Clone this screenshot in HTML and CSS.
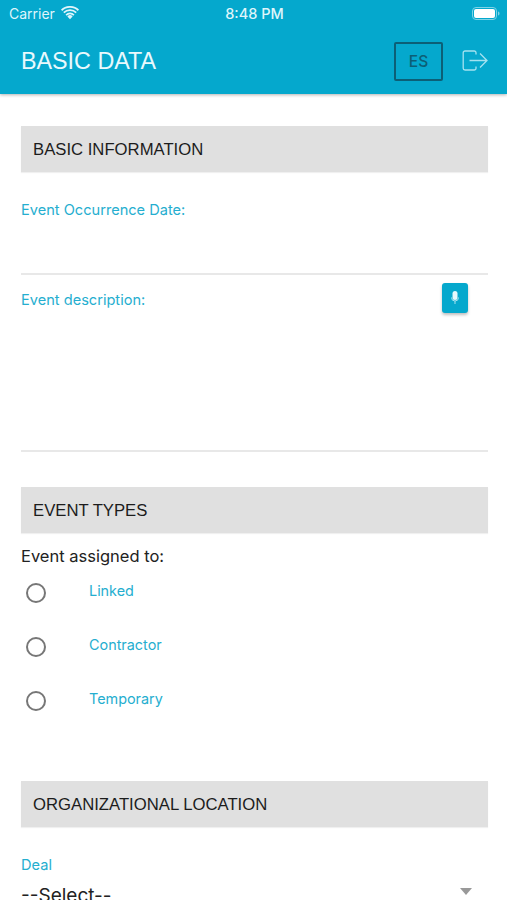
FILE: index.html
```html
<!DOCTYPE html>
<html lang="en">
<head>
<meta charset="utf-8">
<title>Basic Data</title>
<link rel="stylesheet" href="styles.css">
</head>
<body>
<header class="app-header">
  <div class="status-bar">
    <div class="status-left">
      <span>Carrier</span>
      <svg class="wifi" viewBox="0 0 18 14" width="18" height="14"><path d="M9 13.2 6.4 10.4a3.7 3.7 0 0 1 5.2 0Z" fill="#dff5fb"/><path d="M4.5 8.4a6.5 6.5 0 0 1 9 0l-1.2 1.3a4.8 4.8 0 0 0-6.6 0Z" fill="#dff5fb"/><path d="M2.2 6A9.8 9.8 0 0 1 15.8 6l-1.2 1.3a8 8 0 0 0-11.2 0Z" fill="#dff5fb"/><path d="M0 3.6a13 13 0 0 1 18 0l-1.2 1.3a11.2 11.2 0 0 0-15.6 0Z" fill="#dff5fb"/></svg>
    </div>
    <span class="status-time">8:48 PM</span>
    <svg class="battery" viewBox="0 0 28 13" width="28" height="13"><rect x=".5" y=".5" width="24" height="12" rx="3.5" fill="none" stroke="#7fd3e6"/><rect x="2" y="2" width="21" height="9" rx="2" fill="#fff"/><path d="M26 4.5c1 .3 1.500 1.100 1.500 2s-.5 1.700-1.500 2Z" fill="#7fd3e6"/></svg>
  </div>
  <div class="title-bar">
    <h1 class="title">BASIC DATA</h1>
    <button class="lang">ES</button>
    <svg class="logout" viewBox="0 0 26 24" width="26" height="24"><path d="M14 5.500V3.800A1.800 1.800 0 0 0 12.200 2H3A1.800 1.800 0 0 0 1.200 3.800v15.400A1.800 1.800 0 0 0 3 21h9.200a1.800 1.800 0 0 0 1.800-1.800v-1.700" fill="none" stroke="#a5e2f0" stroke-width="1.300"/><path d="M7.500 11.500H25M18 4.500l7 7-7 7" fill="none" stroke="#a5e2f0" stroke-width="1.300"/></svg>
  </div>
</header>
<main class="content">
  <h2 class="section-bar first">BASIC INFORMATION</h2>
  <div class="field date-field"><span class="label">Event Occurrence Date:</span></div>
  <div class="field desc-field">
    <span class="label">Event description:</span>
    <button class="mic" aria-label="Dictate">
      <svg viewBox="0 0 10 16" width="10" height="16"><rect x="2.500" y="1" width="5" height="9" rx="2.500" fill="#e6f8fc"/><path d="M1.500 7.500a3.500 3.500 0 0 0 7 0M5 11v3" fill="none" stroke="#a5e2f0" stroke-width="1"/></svg>
    </button>
  </div>
  <h2 class="section-bar types">EVENT TYPES</h2>
  <p class="assigned">Event assigned to:</p>
  <ul class="radios">
    <li class="radio-row"><span class="radio"></span><span class="radio-label">Linked</span></li>
    <li class="radio-row"><span class="radio"></span><span class="radio-label">Contractor</span></li>
    <li class="radio-row"><span class="radio"></span><span class="radio-label">Temporary</span></li>
  </ul>
  <h2 class="section-bar location">ORGANIZATIONAL LOCATION</h2>
  <div class="deal"><span class="label">Deal</span></div>
  <div class="select"><span>--Select--</span><span class="caret"></span></div>
</main>
</body>
</html>
```
FILE: styles.css
```css
* { box-sizing: border-box; }
html, body { margin: 0; height: 900px; overflow: hidden; background: #fff; }
body { font-family: Inter, "Liberation Sans", sans-serif; color: #222; }

.app-header { height: 94px; background: #05a8cd; box-shadow: 0 1px 3px rgba(0,0,0,.3); color: #fff; position: relative; }
.status-bar { height: 28px; display: grid; grid-template-columns: 1fr auto 1fr; align-items: center; padding: 0 7px 1px 9px; font-size: 14px; color: #dff5fb; }
.status-left { display: flex; align-items: center; gap: 6px; }
.wifi { margin-top: -2px; }
.status-time { font-weight: 500; font-size: 14.5px; }
.battery { justify-self: end; }
.title-bar { height: 66px; display: flex; align-items: center; padding: 4px 19px 4px 21px; }
.title { margin: 0; flex: 1; font-family: "Liberation Sans", sans-serif; font-size: 23.300px; font-weight: 400; color: #e9f9fd; }
.lang { width: 49px; height: 39px; background: transparent; border: 2px solid #0c5f76; border-radius: 2px; color: #0c5f76; font: 500 15.500px Inter, sans-serif; padding: 0; margin-right: 19px; }
.logout { display: block; }

.content { padding: 0 19.500px 0 21px; }
.section-bar { margin: 0; height: 46px; display: flex; align-items: center; padding: 2px 0 0 12px; background: #e0e0e0; font-family: "Liberation Sans", sans-serif; font-size: 16.700px; font-weight: 400; color: #1c1c1c; box-shadow: 0 1px 1px rgba(0,0,0,.06); }
.first { margin-top: 32px; }
.label { color: #25aecf; font-size: 14.600px; }
.field { border-bottom: 2px solid #e8e8e8; position: relative; }
.date-field { height: 103px; padding-top: 27px; }
.desc-field { height: 177px; padding-top: 16px; display: flex; justify-content: space-between; align-items: flex-start; }
.mic { width: 26px; height: 30px; margin: -8px 20px 0 0; padding: 0; border: 0; border-radius: 3px; background: #05a8cd; box-shadow: 0 2px 3px rgba(0,0,0,.25); display: flex; align-items: center; justify-content: center; }
.types { margin-top: 35px; }
.assigned { margin: 13px 0 0; font-size: 16.500px; line-height: 20px; color: #222; }
.radios { list-style: none; margin: 0; padding: 0 0 0 .5px; }
.radio-row { height: 54px; display: flex; align-items: center; padding-left: 4px; }
.radio-row:first-child { margin-top: 0; }
.radio { width: 20px; height: 20px; border: 2px solid #777; border-radius: 50%; }
.radio-label { margin-left: 43.500px; margin-top: -5px; color: #25aecf; font-size: 14.400px; }
.location { margin-top: 53px; }
.deal { margin-top: 28px; line-height: 18px; }
.select { display: flex; justify-content: space-between; align-items: center; margin-top: 10px; font-size: 19px; color: #222; padding-right: 16px; }
.caret { width: 0; height: 0; border: 6.500px solid transparent; border-top: 7px solid #999; border-bottom: 0; margin-top: -8px; }
```
